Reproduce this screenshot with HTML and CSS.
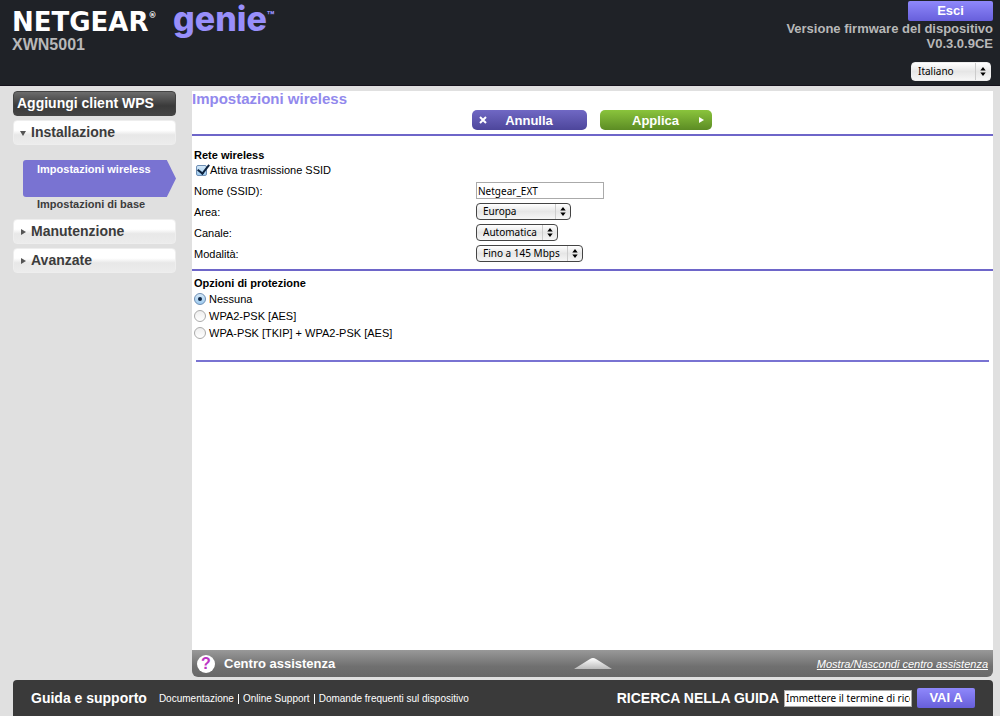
FILE: index.html
```
<!DOCTYPE html>
<html lang="it">
<head>
  <meta charset="UTF-8">
  <meta name="viewport" content="width=device-width, initial-scale=1.0">
  <title>NETGEAR genie - XWN5001</title>
  <link rel="stylesheet" href="styles.css">
</head>
<body>
  <header class="top">
    <div class="brand">
      <div class="logo">
        <span class="netgear">NETGEAR<sup>®</sup></span>
        <span class="genie">genie<sup>™</sup></span>
      </div>
      <div class="model">XWN5001</div>
    </div>
    <div class="status">
      <button type="button" class="btn-flat logout">Esci</button>
      <div class="firmware">Versione firmware del dispositivo<br>V0.3.0.9CE</div>
      <span class="select language">
        <select aria-label="Lingua"><option>Italiano</option><option>English</option></select>
        <svg viewBox="0 0 6 10"><path d="M3 0l3 4H0zM3 10L0 6h6z"/></svg>
      </span>
    </div>
  </header>

  <div class="middle">
    <nav class="sidebar">
      <a href="#" class="tab dark">Aggiungi client WPS</a>
      <a href="#" class="tab"><svg class="mark" viewBox="0 0 8 8"><path d="M1 2h6L4 7z"/></svg>Installazione</a>
      <div class="submenu">
        <a href="#" class="active">Impostazioni wireless</a>
        <a href="#">Impostazioni di base</a>
      </div>
      <a href="#" class="tab"><svg class="mark" viewBox="0 0 8 8"><path d="M2 1v6l5-3z"/></svg>Manutenzione</a>
      <a href="#" class="tab"><svg class="mark" viewBox="0 0 8 8"><path d="M2 1v6l5-3z"/></svg>Avanzate</a>
    </nav>

    <main class="panel">
      <form class="content">
        <h1>Impostazioni wireless</h1>
        <div class="actions">
          <button type="button" class="btn cancel">
            <svg viewBox="0 0 8 8"><path d="M1 1l6 6M7 1L1 7" stroke="#fff" stroke-width="2"/></svg>
            <span>Annulla</span>
          </button>
          <button type="button" class="btn apply">
            <span>Applica</span>
            <svg viewBox="0 0 8 8"><path d="M2 1v6l5-3z" fill="#fff"/></svg>
          </button>
        </div>

        <section class="network">
          <h2>Rete wireless</h2>
          <div class="choice">
            <input type="checkbox" id="broadcast" checked>
            <label for="broadcast">Attiva trasmissione SSID</label>
          </div>
          <div class="field">
            <label for="ssid">Nome (SSID):</label>
            <input type="text" id="ssid" value="Netgear_EXT">
          </div>
          <div class="field">
            <label for="area">Area:</label>
            <span class="select area">
              <select id="area"><option>Europa</option></select>
              <svg viewBox="0 0 6 10"><path d="M3 0l3 4H0zM3 10L0 6h6z"/></svg>
            </span>
          </div>
          <div class="field">
            <label for="channel">Canale:</label>
            <span class="select channel">
              <select id="channel"><option>Automatica</option></select>
              <svg viewBox="0 0 6 10"><path d="M3 0l3 4H0zM3 10L0 6h6z"/></svg>
            </span>
          </div>
          <div class="field">
            <label for="mode">Modalità:</label>
            <span class="select mode">
              <select id="mode"><option>Fino a 145 Mbps</option></select>
              <svg viewBox="0 0 6 10"><path d="M3 0l3 4H0zM3 10L0 6h6z"/></svg>
            </span>
          </div>
        </section>

        <section class="security">
          <h2>Opzioni di protezione</h2>
          <div class="choice">
            <input type="radio" name="security" id="none" checked>
            <label for="none">Nessuna</label>
          </div>
          <div class="choice">
            <input type="radio" name="security" id="wpa2">
            <label for="wpa2">WPA2-PSK [AES]</label>
          </div>
          <div class="choice">
            <input type="radio" name="security" id="mixed">
            <label for="mixed">WPA-PSK [TKIP] + WPA2-PSK [AES]</label>
          </div>
        </section>
        <hr>
      </form>

      <div class="help">
        <span class="question">?</span>
        <strong>Centro assistenza</strong>
        <svg class="up" viewBox="0 0 38 11">
          <defs>
            <linearGradient id="fade" x1="0" y1="0" x2="0" y2="1">
              <stop offset="0" stop-color="#fff"/>
              <stop offset="1" stop-color="#bbb"/>
            </linearGradient>
          </defs>
          <path d="M0 11L16 1q3-2 6 0l16 10z" fill="url(#fade)"/>
        </svg>
        <a href="#">Mostra/Nascondi centro assistenza</a>
      </div>
    </main>
  </div>

  <footer class="bottom">
    <strong>Guida e supporto</strong>
    <div class="links">
      <a href="#">Documentazione</a>
      <a href="#">Online Support</a>
      <a href="#">Domande frequenti sul dispositivo</a>
    </div>
    <form class="search">
      <label for="search">RICERCA NELLA GUIDA</label>
      <input type="text" id="search" value="Immettere il termine di ricerca">
      <button type="button" class="btn-flat">VAI A</button>
    </form>
  </footer>
</body>
</html>
```

FILE: styles.css
```
* {
  box-sizing: border-box;
}

body {
  margin: 0;
  min-height: 100vh;
  display: flex;
  flex-direction: column;
  background: #e0e0e0;
  color: #000;
  font-family: "Liberation Sans", Arial, sans-serif;
  font-size: 11px;
  line-height: 14px;
}

button,
select,
input {
  margin: 0;
  font-family: inherit;
}

/* header */
.top {
  display: flex;
  justify-content: space-between;
  height: 86px;
  padding: 0 7px 0 12px;
  background: #1f2227;
  border-bottom: 1px solid #15121c;
}
.logo {
  display: flex;
  align-items: baseline;
  gap: 12px;
  height: 37px;
}
.logo sup {
  align-self: flex-start;
  margin-top: 12px;
  font-size: 8px;
  line-height: 8px;
}
.netgear,
.genie {
  display: flex;
  align-items: baseline;
}
.netgear {
  width: 149px;
  color: #fff;
  font-family: "DejaVu Sans", sans-serif;
  font-size: 26px;
  font-weight: bold;
  line-height: 26px;
}
.netgear sup {
  margin-top: 3px;
}
.genie {
  color: #988ffa;
  font-family: Inter, sans-serif;
  font-size: 34px;
  font-weight: 800;
  line-height: 38px;
}
.genie sup {
  font-size: 12px;
}
.model {
  color: #b8b8b8;
  font-size: 16px;
  font-weight: bold;
  line-height: 16px;
}
.status {
  display: flex;
  flex-direction: column;
  align-items: flex-end;
  padding-top: 1px;
}
.firmware {
  margin: 0 0 11px;
  color: #b8b8b8;
  font-size: 13px;
  font-weight: bold;
  line-height: 15px;
  text-align: right;
}

.btn-flat {
  height: 20px;
  padding: 0;
  border: 0;
  border-radius: 2px;
  background: linear-gradient(#8f88fb, #675fdb);
  color: #fff;
  font-size: 13px;
  font-weight: bold;
  line-height: 20px;
  cursor: pointer;
}
.logout {
  width: 85px;
}

.select {
  position: relative;
  display: inline-block;
}
.select select {
  appearance: none;
  display: block;
  width: 100%;
  height: 17px;
  padding: 0 16px 0 6px;
  border: 1px solid #444;
  border-radius: 4px;
  background: linear-gradient(#fff, #e6e6e6 50%, #f6f6f6);
  color: #000;
  font-family: "Noto Sans", sans-serif;
  font-size: 10px;
  line-height: 15px;
}
.select svg {
  position: absolute;
  top: 4px;
  right: 5px;
  width: 6px;
  height: 9px;
  pointer-events: none;
}
.select::after {
  content: "";
  position: absolute;
  top: 1px;
  bottom: 1px;
  right: 15px;
  border-left: 1px solid #ccc;
}
.language {
  width: 80px;
  margin-right: 2px;
}
.language select {
  height: 19px;
  border-color: #eee;
  line-height: 17px;
}
.language svg {
  top: 5px;
}
.area {
  width: 95px;
}
.channel {
  width: 82px;
}
.mode {
  width: 107px;
}

/* side menu */
.middle {
  flex: 1;
  display: flex;
  gap: 16px;
  padding: 5px 7px 3px 13px;
}
.sidebar {
  flex: none;
  width: 163px;
}
.sidebar a {
  color: #3c3c3c;
  font-weight: bold;
  text-decoration: none;
}
.sidebar .tab {
  display: flex;
  align-items: center;
  height: 25px;
  margin-bottom: 4px;
  padding-left: 5px;
  border: 1px solid #eee;
  border-radius: 4px;
  background: linear-gradient(#fff 40%, #e8e8e8 60%, #ececec);
  font-size: 14px;
  line-height: 23px;
}
.sidebar .dark {
  padding-left: 3px;
  border-color: #444;
  background: linear-gradient(#6c6c6c, #3a3a3a 60%, #444);
  color: #fff;
}
.mark {
  width: 8px;
  height: 8px;
  margin-right: 4px;
  fill: #555;
}
.submenu {
  padding: 11px 0 8px 10px;
}
.submenu a {
  display: block;
  padding-left: 14px;
  line-height: 14px;
}
.submenu .active {
  height: 37px;
  padding-top: 2px;
  border-radius: 3px 0 0 3px;
  background: #7973d2;
  clip-path: polygon(0 0, 94% 0, 100% 50%, 94% 100%, 0 100%);
  color: #fff;
}

/* main panel */
.panel {
  flex: 1;
  display: flex;
  flex-direction: column;
}
.content {
  flex: 1;
  background: #fff;
}
h1 {
  margin: 0;
  color: #9289ed;
  font-size: 15px;
  line-height: 16px;
}
.actions {
  display: flex;
  justify-content: center;
  gap: 13px;
  padding: 3px 2px 4px 0;
  border-bottom: 2px solid #6e66c9;
}
.btn {
  display: flex;
  align-items: center;
  width: 115px;
  height: 20px;
  padding: 0 7px;
  border: 0;
  border-radius: 5px;
  color: #fff;
  font-size: 13px;
  font-weight: bold;
  cursor: pointer;
}
.btn span {
  flex: 1;
}
.btn svg {
  width: 8px;
  height: 8px;
}
.cancel {
  background: linear-gradient(#7068c4, #4d469b);
}
.cancel span {
  margin-right: 8px;
}
.apply {
  width: 112px;
  background: linear-gradient(#8ac43c, #5c8c24);
}
.apply span {
  margin-left: 8px;
}

h2 {
  margin: 0;
  font-size: 11px;
  line-height: 14px;
}
.network {
  padding: 12px 2px 5px;
  border-bottom: 2px solid #6e66c9;
}
.field {
  display: grid;
  grid-template-columns: 282px 1fr;
  align-items: center;
  height: 21px;
}
.choice {
  display: flex;
  align-items: center;
  gap: 3px;
  height: 17px;
}
.network .choice {
  height: 16px;
  margin-bottom: 2px;
  padding-left: 2px;
}
.choice input {
  appearance: none;
  position: relative;
  width: 12px;
  height: 12px;
  border: 1px solid #aaa;
  border-radius: 50%;
  background: linear-gradient(#eee, #fff);
}
.choice input:checked {
  border-color: #6e8fb5;
  background: linear-gradient(#d4e8f8, #9ecbf0);
}
.choice input[type="radio"]:checked::after {
  content: "";
  position: absolute;
  inset: 3px;
  border-radius: 50%;
  background: #0d2340;
}
.choice input[type="checkbox"] {
  width: 11px;
  height: 11px;
  border-radius: 2px;
}
.choice input[type="checkbox"]:checked::after {
  content: "";
  position: absolute;
  left: 3px;
  bottom: 1px;
  width: 5px;
  height: 10px;
  border: solid #0d2340;
  border-width: 0 2px 2px 0;
  transform: rotate(38deg);
}
input[type="text"] {
  width: 128px;
  height: 17px;
  padding: 0 1px;
  border: 1px solid #aaa;
  background: #fff;
  color: #000;
  font-family: "Noto Sans", sans-serif;
  font-size: 10px;
}
.security {
  padding: 5px 2px 0;
}
hr {
  margin: 19px 4px 0;
  border: 0;
  border-top: 2px solid #7973d2;
}

.help {
  display: flex;
  align-items: center;
  height: 27px;
  padding: 0 5px;
  border-radius: 0 0 6px 6px;
  background: linear-gradient(#999, #707070 60%, #686868);
  color: #fff;
}
.question {
  width: 18px;
  height: 18px;
  margin-right: 9px;
  border-radius: 50%;
  background: #fff;
  color: #bb33c4;
  font-size: 16px;
  font-weight: bold;
  line-height: 18px;
  text-align: center;
}
.help strong,
.help a {
  flex: 1 1 0;
  white-space: nowrap;
}
.help strong {
  font-size: 13px;
}
.help a {
  flex-basis: 27px;
  color: #fff;
  font-style: italic;
  text-align: right;
}
.up {
  width: 38px;
  height: 11px;
}

/* footer */
.bottom {
  display: flex;
  align-items: center;
  height: 36px;
  margin: 0 7px 0 13px;
  padding: 0 18px;
  border-radius: 4px 4px 0 0;
  background: #3a3a3a;
  color: #fff;
}
.bottom strong {
  margin-right: 12px;
  font-size: 14px;
}
.links {
  flex: 1;
  display: flex;
  padding-top: 2px;
  font-size: 10px;
}
.links a {
  color: #fff;
  line-height: 10px;
  text-decoration: none;
}
.links a + a {
  margin-left: 4px;
  padding-left: 4px;
  border-left: 1px solid #fff;
}
.search {
  display: flex;
  align-items: center;
  gap: 5px;
}
.search label {
  font-size: 14px;
  font-weight: bold;
}
.search .btn-flat {
  width: 58px;
}
```
